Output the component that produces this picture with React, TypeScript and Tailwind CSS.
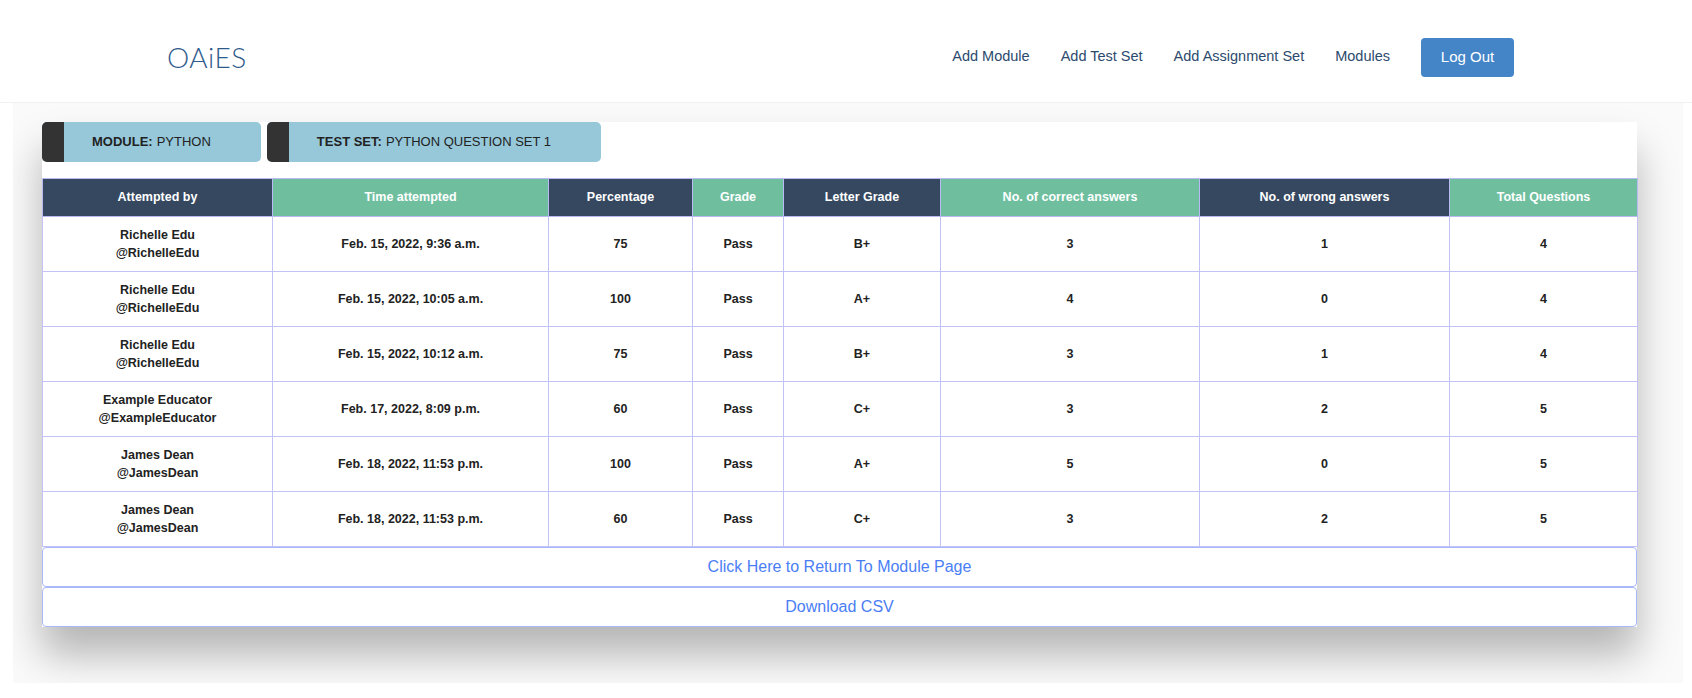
import React from "react";

const cols = [230, 276, 144, 91, 157, 259, 250, 188];

const headers: { label: string; dark: boolean }[] = [
  { label: "Attempted by", dark: true },
  { label: "Time attempted", dark: false },
  { label: "Percentage", dark: true },
  { label: "Grade", dark: false },
  { label: "Letter Grade", dark: true },
  { label: "No. of correct answers", dark: false },
  { label: "No. of wrong answers", dark: true },
  { label: "Total Questions", dark: false },
];

const rows = [
  ["Richelle Edu", "@RichelleEdu", "Feb. 15, 2022, 9:36 a.m.", "75", "Pass", "B+", "3", "1", "4"],
  ["Richelle Edu", "@RichelleEdu", "Feb. 15, 2022, 10:05 a.m.", "100", "Pass", "A+", "4", "0", "4"],
  ["Richelle Edu", "@RichelleEdu", "Feb. 15, 2022, 10:12 a.m.", "75", "Pass", "B+", "3", "1", "4"],
  ["Example Educator", "@ExampleEducator", "Feb. 17, 2022, 8:09 p.m.", "60", "Pass", "C+", "3", "2", "5"],
  ["James Dean", "@JamesDean", "Feb. 18, 2022, 11:53 p.m.", "100", "Pass", "A+", "5", "0", "5"],
  ["James Dean", "@JamesDean", "Feb. 18, 2022, 11:53 p.m.", "60", "Pass", "C+", "3", "2", "5"],
];

function Tab({ label, value }: { label: string; value: string }) {
  return (
    <div className="flex h-[40px] rounded-[5px] overflow-hidden bg-[#96c8da]">
      <div className="w-[22px] bg-[#333333]" />
      <div className="flex items-center pl-[28px] pr-[50px] text-[13px] text-[#222] uppercase">
        <span className="font-bold">{label}:</span>
        <span className="ml-[4px]">{value}</span>
      </div>
    </div>
  );
}

export default function App() {
  return (
    <div className="min-h-[698px] bg-white" style={{ fontFamily: '"Liberation Sans", Arial, sans-serif' }}>
      <header className="h-[103px] border-b border-[#eef2f5] flex items-center pt-[12px] pl-[167px] pr-[178px]">
        <div
          className="text-[28px] font-light text-[#2f5b8c] tracking-[0.5px]"
          style={{ fontFamily: 'Lato, "Open Sans", sans-serif' }}
        >
          OAiES
        </div>
        <nav className="ml-auto flex items-center gap-[31px] text-[14.5px] text-[#2c4a6d]">
          <a>Add Module</a>
          <a>Add Test Set</a>
          <a>Add Assignment Set</a>
          <a>Modules</a>
          <button className="h-[39px] w-[93px] rounded-[4px] bg-[#4485c8] text-white text-[15px]">
            Log Out
          </button>
        </nav>
      </header>

      <div className="ml-[13px] mr-[9px] bg-[#fafafa] overflow-hidden pt-[19px] pl-[29px] pr-[46px] pb-[56px]">
        <div className="bg-white shadow-[0_28px_38px_rgba(0,0,0,0.28)]">
          <div className="flex gap-[6px]">
            <Tab label="Module" value="Python" />
            <Tab label="Test Set" value="Python Question Set 1" />
          </div>

          <table className="mt-[16px] w-full table-fixed border-collapse text-[12.5px] font-bold text-[#222]">
            <colgroup>
              {cols.map((w, i) => (
                <col key={i} style={{ width: w }} />
              ))}
            </colgroup>
            <thead>
              <tr className="h-[38px]">
                {headers.map((h) => (
                  <th
                    key={h.label}
                    className={`border border-[#b9b9f4] text-white font-bold ${h.dark ? "bg-[#36485f]" : "bg-[#6fbf9f]"}`}
                  >
                    {h.label}
                  </th>
                ))}
              </tr>
            </thead>
            <tbody>
              {rows.map((r, i) => (
                <tr key={i} className="h-[55px]">
                  <td className="border border-[#c2c2f7] text-center leading-[18px]">
                    <div>{r[0]}</div>
                    <div>{r[1]}</div>
                  </td>
                  {r.slice(2).map((c, j) => (
                    <td key={j} className="border border-[#c2c2f7] text-center">
                      {c}
                    </td>
                  ))}
                </tr>
              ))}
            </tbody>
          </table>

          <button className="w-full h-[40px] border border-[#a9b8f8] rounded-[4px] bg-white text-[16px] text-[#4a7ef5]">
            Click Here to Return To Module Page
          </button>
          <button className="w-full h-[40px] border border-[#a9b8f8] rounded-[4px] bg-white text-[16px] text-[#4a7ef5]">
            Download CSV
          </button>
        </div>
      </div>
    </div>
  );
}
